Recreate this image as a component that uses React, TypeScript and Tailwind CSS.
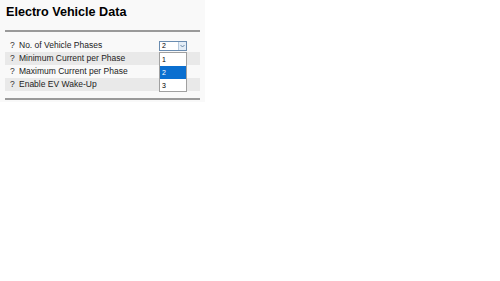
import React from 'react';

const rows = [
  'No. of Vehicle Phases',
  'Minimum Current per Phase',
  'Maximum Current per Phase',
  'Enable EV Wake-Up',
];

export default function App() {
  return (
    <div className="w-[500px] h-[281px] bg-white font-['Liberation_Sans',Arial,sans-serif] text-black">
      <div className="w-[205px] bg-[#f9f9f9] pt-[5px] pb-[2px]">
        {/* Title */}
        <h1 className="px-[6px] h-[25px] text-[12.6px] font-bold leading-[14px]">Electro Vehicle Data</h1>
        <div className="mx-[5px] h-[2px] bg-[#9a9a9a]" />

        {/* Settings rows */}
        <div className="mx-[5px] mt-[7px] mb-[7px] relative">
          {rows.map((label, i) => (
            <div
              key={label}
              className={`flex items-center h-[13px] text-[8.5px] leading-none ${i % 2 === 1 ? 'bg-[#e9e9e9]' : ''}`}
            >
              <span className="w-[14px] pl-[5px] text-[#333]">?</span>
              <span className="flex-1 text-[#222]">{label}</span>
              {i === 0 && (
                <div className="mr-[13px] flex h-[10px] w-[28px] border border-[#6a8cb0] bg-white">
                  <span className="flex-1 pl-[2px] text-[7px] leading-[8px]">2</span>
                  <span className="flex w-[8px] items-center justify-center bg-[#e3edf7] border-l border-[#b6c9dd]">
                    <svg width="5" height="4" viewBox="0 0 5 4">
                      <path d="M0.5 1 L2.5 3 L4.5 1" fill="none" stroke="#4d6f93" strokeWidth="0.8" />
                    </svg>
                  </span>
                </div>
              )}
            </div>
          ))}

          {/* Open dropdown list */}
          <div className="absolute left-[154px] top-[13px] w-[28px] border border-[#a0a0a0] bg-white text-[7px] leading-none">
            <div className="h-[13px] flex items-center pl-[2px]">1</div>
            <div className="h-[13px] flex items-center pl-[2px] bg-[#0a6fd0] text-white">2</div>
            <div className="h-[12px] flex items-center pl-[2px]">3</div>
          </div>
        </div>

        <div className="mx-[5px] h-[2px] bg-[#9a9a9a]" />
      </div>
    </div>
  );
}
